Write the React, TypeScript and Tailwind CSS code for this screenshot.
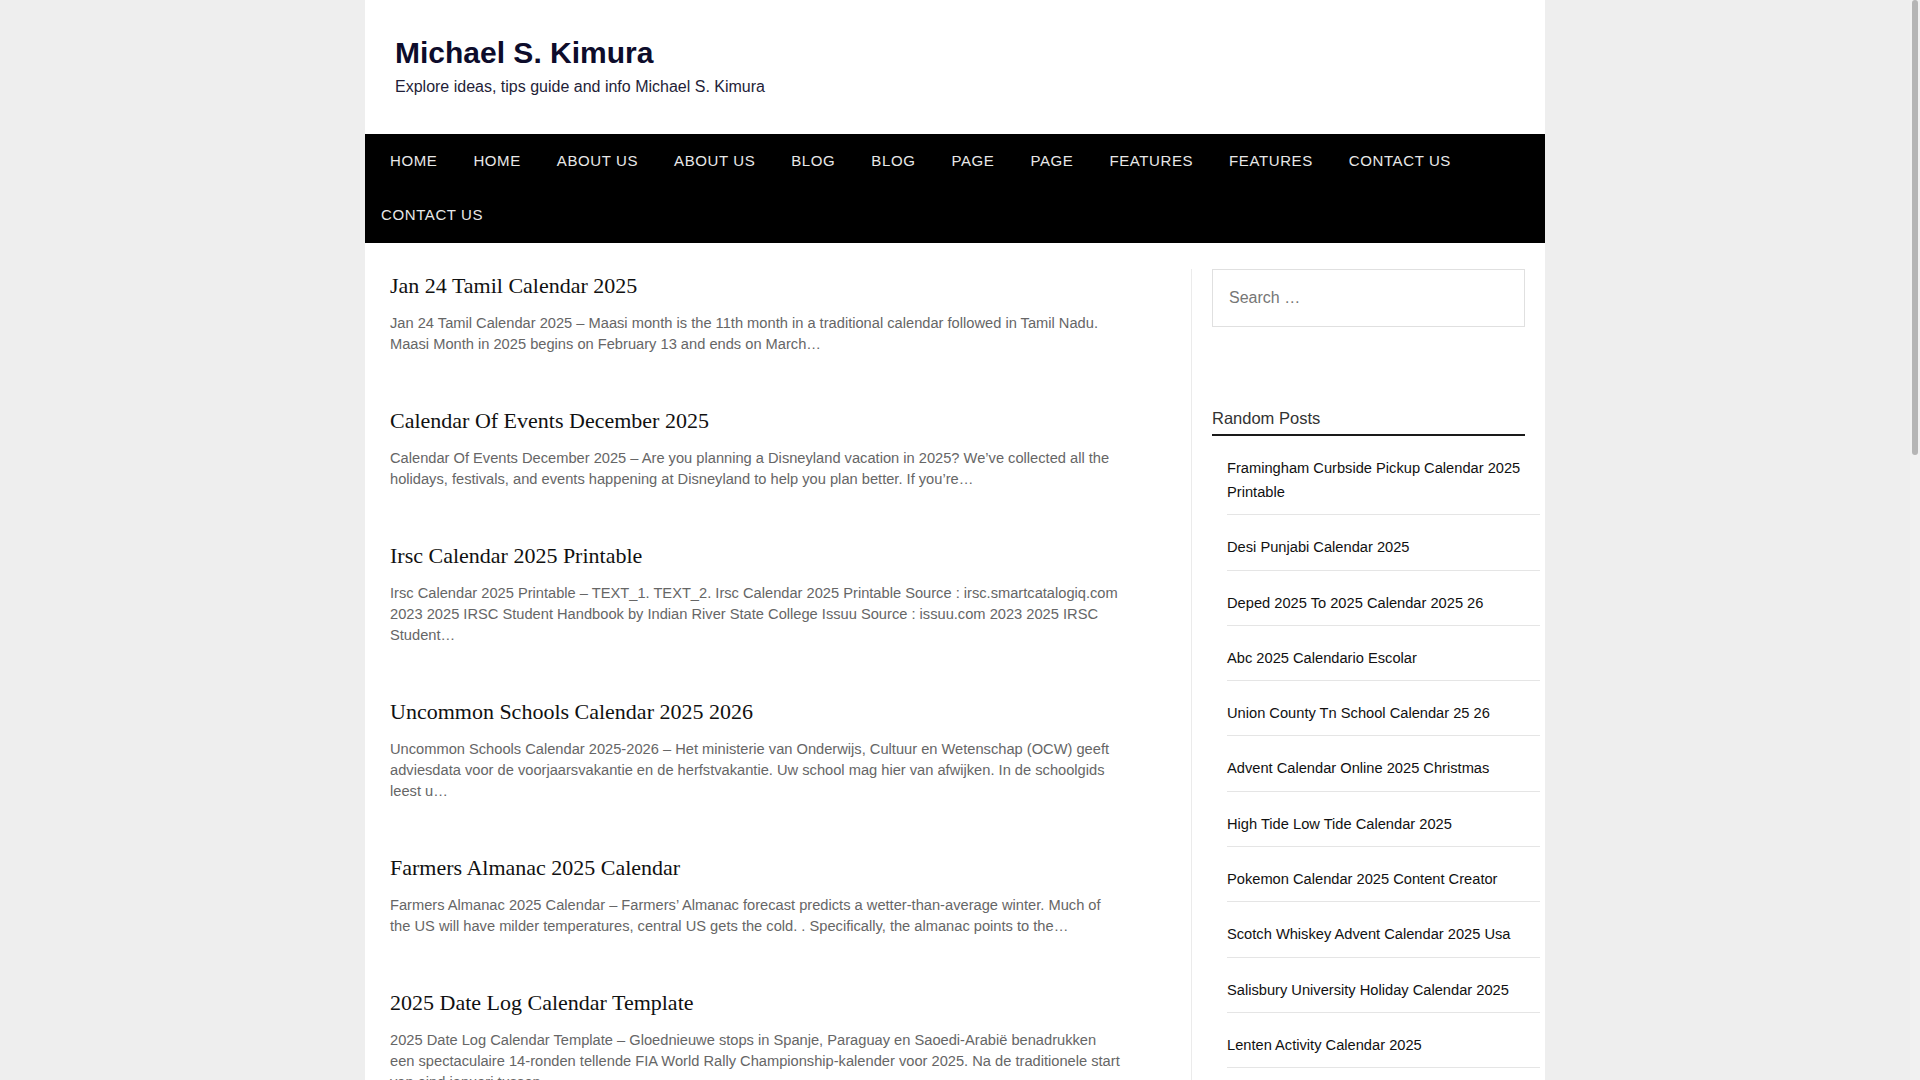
import React from "react";

const navRow1 = [
  "Home",
  "Home",
  "About Us",
  "About Us",
  "Blog",
  "Blog",
  "Page",
  "Page",
  "Features",
  "Features",
  "Contact Us",
];

const posts = [
  {
    title: "Jan 24 Tamil Calendar 2025",
    excerpt:
      "Jan 24 Tamil Calendar 2025 – Maasi month is the 11th month in a traditional calendar followed in Tamil Nadu. Maasi Month in 2025 begins on February 13 and ends on March…",
  },
  {
    title: "Calendar Of Events December 2025",
    excerpt:
      "Calendar Of Events December 2025 – Are you planning a Disneyland vacation in 2025? We’ve collected all the holidays, festivals, and events happening at Disneyland to help you plan better. If you’re…",
  },
  {
    title: "Irsc Calendar 2025 Printable",
    excerpt:
      "Irsc Calendar 2025 Printable – TEXT_1. TEXT_2. Irsc Calendar 2025 Printable Source : irsc.smartcatalogiq.com 2023 2025 IRSC Student Handbook by Indian River State College Issuu Source : issuu.com 2023 2025 IRSC Student…",
  },
  {
    title: "Uncommon Schools Calendar 2025 2026",
    excerpt:
      "Uncommon Schools Calendar 2025-2026 – Het ministerie van Onderwijs, Cultuur en Wetenschap (OCW) geeft adviesdata voor de voorjaarsvakantie en de herfstvakantie. Uw school mag hier van afwijken. In de schoolgids leest u…",
  },
  {
    title: "Farmers Almanac 2025 Calendar",
    excerpt:
      "Farmers Almanac 2025 Calendar – Farmers’ Almanac forecast predicts a wetter-than-average winter. Much of the US will have milder temperatures, central US gets the cold. . Specifically, the almanac points to the…",
  },
  {
    title: "2025 Date Log Calendar Template",
    excerpt:
      "2025 Date Log Calendar Template – Gloednieuwe stops in Spanje, Paraguay en Saoedi-Arabië benadrukken een spectaculaire 14-ronden tellende FIA World Rally Championship-kalender voor 2025. Na de traditionele start van eind januari tussen…",
  },
];

const randomPosts = [
  "Framingham Curbside Pickup Calendar 2025 Printable",
  "Desi Punjabi Calendar 2025",
  "Deped 2025 To 2025 Calendar 2025 26",
  "Abc 2025 Calendario Escolar",
  "Union County Tn School Calendar 25 26",
  "Advent Calendar Online 2025 Christmas",
  "High Tide Low Tide Calendar 2025",
  "Pokemon Calendar 2025 Content Creator",
  "Scotch Whiskey Advent Calendar 2025 Usa",
  "Salisbury University Holiday Calendar 2025",
  "Lenten Activity Calendar 2025",
];

export default function App() {
  return (
    <div className="min-h-screen bg-[#eeeeee] pr-[10px] font-['Liberation_Sans',Arial,sans-serif]">
      <div className="mx-auto min-h-[2560px] w-[1180px] bg-white">
        <header className="pb-[35px] pl-[30px] pt-[35px]">
          <h1 className="text-[30px] font-bold leading-[36px] text-[#0d0c2b]">
            <a href="#">Michael S. Kimura</a>
          </h1>
          <p className="mt-[4px] text-[16px] leading-[24px] text-[#1f1e38]">
            Explore ideas, tips guide and info Michael S. Kimura
          </p>
        </header>

        <nav className="bg-black pb-[1px]">
          <ul className="flex h-[54px] items-center pl-[7px]">
            {navRow1.map((item, i) => (
              <li
                key={i}
                className="px-[18px] text-[15px] uppercase leading-[54px] tracking-[0.6px] text-[#e8e8e8]"
              >
                <a href="#">{item}</a>
              </li>
            ))}
          </ul>
          <ul className="flex h-[54px] items-center">
            <li className="px-[16px] text-[15px] uppercase leading-[54px] tracking-[0.6px] text-[#e8e8e8]">
              <a href="#">Contact Us</a>
            </li>
          </ul>
        </nav>

        <div className="mt-[26px] flex">
          <main className="w-[826px] pl-[25px] pt-[3px]">
            {posts.map((p, i) => (
              <article key={i} className="mb-[52px] w-[733px]">
                <h2 className="mb-[13px] font-['Liberation_Serif','Times_New_Roman',serif] text-[22px] leading-[28px] text-[#111111]">
                  <a href="#">{p.title}</a>
                </h2>
                <p className="text-[14.67px] leading-[21px] text-[#666666]">
                  {p.excerpt}
                </p>
              </article>
            ))}
          </main>

          <aside className="w-[354px] border-l border-[#ebebeb] px-[20px]">
            <input
              type="search"
              placeholder="Search …"
              className="h-[58px] w-full border border-[#e0e0e0] bg-white pl-[16px] text-[16px] text-[#333] outline-none placeholder:text-[#767676]"
            />
            <h3 className="mt-[79px] border-b-2 border-[#1a1a1a] pb-[4px] text-[16.5px] leading-[24px] text-[#333333]">
              Random Posts
            </h3>
            <ul className="ml-[15px] w-[313px]">
              {randomPosts.map((t, i) => (
                <li
                  key={i}
                  className="border-b border-[#e5e5e5] pb-[10.3px] pt-[20px] text-[14.67px] leading-[24px] text-[#111111]"
                >
                  <a href="#">{t}</a>
                </li>
              ))}
            </ul>
          </aside>
        </div>
      </div>

      {/* page scrollbar, drawn over the right edge of the viewport */}
      <div className="fixed right-0 top-0 h-screen w-[10px] bg-[#f1f1f1]">
        <div className="mx-auto h-[455px] w-[6px] rounded-[3px] bg-[#b5b5b5]" />
      </div>
    </div>
  );
}
